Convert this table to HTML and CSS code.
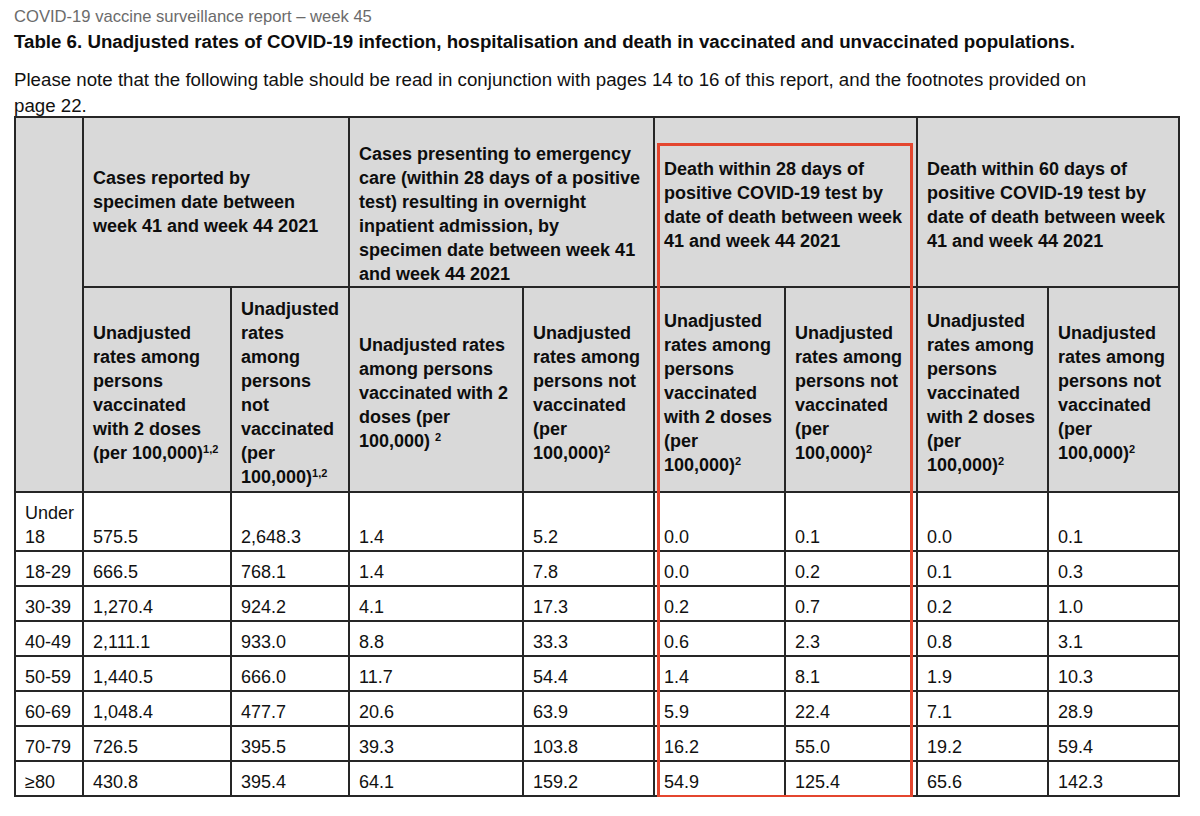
FILE: index.html
```html
<!DOCTYPE html>
<html lang="en">
<head>
<meta charset="utf-8">
<title>Table 6 – COVID-19 vaccine surveillance report</title>
<link rel="stylesheet" href="styles.css">
</head>
<body>
<div class="page">
  <p class="doc-running">COVID-19 vaccine surveillance report – week 45</p>
  <h1 class="doc-title">Table 6. Unadjusted rates of COVID-19 infection, hospitalisation and death in vaccinated and unvaccinated populations.</h1>
  <p class="doc-note">Please note that the following table should be read in conjunction with pages 14 to 16 of this report, and the footnotes provided on page 22.</p>

  <div class="table-wrap">
    <table class="rates">
      <colgroup>
        <col class="c-age">
        <col class="c-a1">
        <col class="c-a2">
        <col class="c-b1">
        <col class="c-b2">
        <col class="c-n">
        <col class="c-n2">
        <col class="c-n">
        <col class="c-n">
      </colgroup>
      <thead>
        <tr class="row-group">
          <th class="age-head" rowspan="2"></th>
          <th class="grp grp-cases" colspan="2">Cases reported by specimen date between week 41 and week 44 2021</th>
          <th class="grp grp-ec" colspan="2">Cases presenting to emergency care (within 28 days of a positive test) resulting in overnight inpatient admission, by specimen date between week 41 and week 44 2021</th>
          <th class="grp grp-death" colspan="2">Death within 28 days of positive COVID-19 test by date of death between week 41 and week 44 2021</th>
          <th class="grp grp-death" colspan="2">Death within 60 days of positive COVID-19 test by date of death between week 41 and week 44 2021</th>
        </tr>
        <tr class="row-sub">
          <th class="sub">Unadjusted rates among persons vaccinated with 2 doses (per 100,000)<sup class="fn">1,2</sup></th>
          <th class="sub">Unadjusted rates among persons not vaccinated (per 100,000)<sup class="fn">1,2</sup></th>
          <th class="sub">Unadjusted rates among persons vaccinated with 2 doses (per 100,000) <sup class="fn">2</sup></th>
          <th class="sub">Unadjusted rates among persons not vaccinated (per 100,000)<sup class="fn">2</sup></th>
          <th class="sub">Unadjusted rates among persons vaccinated with 2 doses (per 100,000)<sup class="fn">2</sup></th>
          <th class="sub">Unadjusted rates among persons not vaccinated (per 100,000)<sup class="fn">2</sup></th>
          <th class="sub">Unadjusted rates among persons vaccinated with 2 doses (per 100,000)<sup class="fn">2</sup></th>
          <th class="sub">Unadjusted rates among persons not vaccinated (per 100,000)<sup class="fn">2</sup></th>
        </tr>
      </thead>
      <tbody>
        <tr class="row-tall">
          <td>Under 18</td><td>575.5</td><td>2,648.3</td><td>1.4</td><td>5.2</td><td>0.0</td><td>0.1</td><td>0.0</td><td>0.1</td>
        </tr>
        <tr>
          <td>18-29</td><td>666.5</td><td>768.1</td><td>1.4</td><td>7.8</td><td>0.0</td><td>0.2</td><td>0.1</td><td>0.3</td>
        </tr>
        <tr>
          <td>30-39</td><td>1,270.4</td><td>924.2</td><td>4.1</td><td>17.3</td><td>0.2</td><td>0.7</td><td>0.2</td><td>1.0</td>
        </tr>
        <tr>
          <td>40-49</td><td>2,111.1</td><td>933.0</td><td>8.8</td><td>33.3</td><td>0.6</td><td>2.3</td><td>0.8</td><td>3.1</td>
        </tr>
        <tr>
          <td>50-59</td><td>1,440.5</td><td>666.0</td><td>11.7</td><td>54.4</td><td>1.4</td><td>8.1</td><td>1.9</td><td>10.3</td>
        </tr>
        <tr>
          <td>60-69</td><td>1,048.4</td><td>477.7</td><td>20.6</td><td>63.9</td><td>5.9</td><td>22.4</td><td>7.1</td><td>28.9</td>
        </tr>
        <tr>
          <td>70-79</td><td>726.5</td><td>395.5</td><td>39.3</td><td>103.8</td><td>16.2</td><td>55.0</td><td>19.2</td><td>59.4</td>
        </tr>
        <tr>
          <td>≥80</td><td>430.8</td><td>395.4</td><td>64.1</td><td>159.2</td><td>54.9</td><td>125.4</td><td>65.6</td><td>142.3</td>
        </tr>
      </tbody>
    </table>
    <div class="highlight" aria-hidden="true"></div>
  </div>
</div>
</body>
</html>
```

FILE: styles.css
```css
* {
  box-sizing: border-box;
}

body {
  margin: 0;
  background: #ffffff;
  color: #111111;
  font-family: "Liberation Sans", Arial, Helvetica, sans-serif;
}

.page {
  padding: 7px 0 0 14px;
}

.doc-running {
  margin: 0;
  font-size: 16.6px;
  line-height: 20px;
  color: #6b6b6b;
}

.doc-title {
  margin: 3px 0 0;
  font-size: 18.7px;
  line-height: 24px;
  font-weight: 700;
  color: #0d0d0d;
}

.doc-note {
  margin: 13px 0 -3.5px;
  width: 1110px;
  font-size: 18.7px;
  line-height: 26px;
  color: #111111;
}

.table-wrap {
  position: relative;
  width: 1166px;
}

.rates {
  width: 1166px;
  table-layout: fixed;
  border-collapse: collapse;
  font-size: 18px;
  line-height: 24px;
}

.c-age { width: 68px; }
.c-a1 { width: 148px; }
.c-a2 { width: 118px; }
.c-b1 { width: 174px; }
.c-b2 { width: 131px; }
.c-n { width: 131px; }
.c-n2 { width: 132px; }

.rates th,
.rates td {
  border: 2px solid #262626;
  padding: 0 9px;
  text-align: left;
}

.rates th {
  background: #d9d9d9;
  font-weight: 700;
  color: #0d0d0d;
}

.row-group {
  height: 170px;
}

.row-sub {
  height: 205px;
}

.rates .grp {
  vertical-align: middle;
}

.rates .grp-cases {
  padding-right: 16px;
}

.rates .grp-ec {
  vertical-align: bottom;
  padding-bottom: 0;
}

.rates .grp-death {
  padding-top: 7px;
}

.rates .sub {
  vertical-align: middle;
  padding-top: 7px;
}

.fn {
  font-size: 11px;
  line-height: 0;
  vertical-align: 6px;
}

.rates td {
  height: 35px;
  vertical-align: bottom;
  padding-bottom: 1px;
  color: #111111;
  font-weight: 400;
}

.rates .row-tall td {
  height: 59px;
}

.highlight {
  position: absolute;
  left: 643px;
  top: 27px;
  width: 256px;
  height: 655px;
  border: 3px solid #e4462f;
  pointer-events: none;
}
```
